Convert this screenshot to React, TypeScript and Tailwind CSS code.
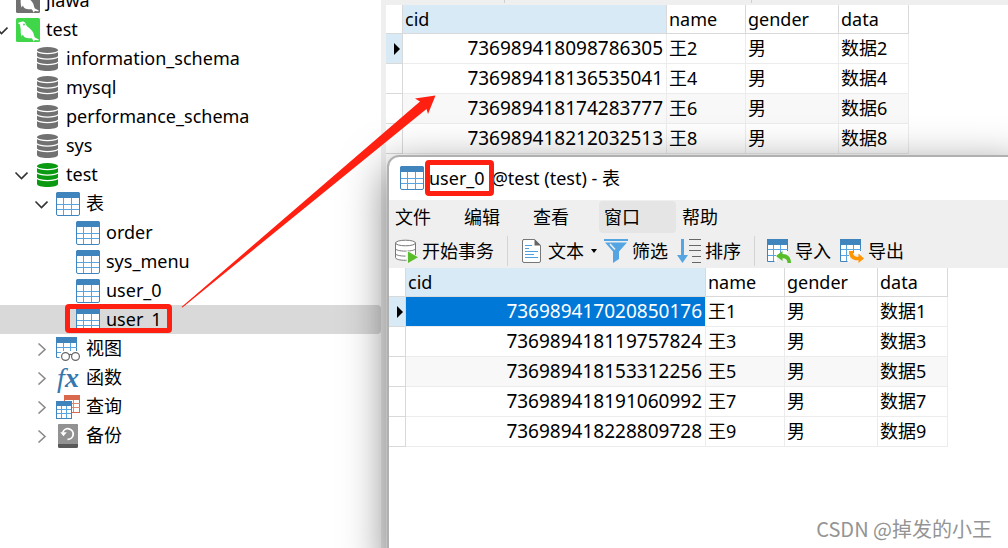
import { ReactNode, useState } from "react";
import clsx from "clsx";

type Row = { cid: string; name: string; gender: string; data: string };

type TreeItem = {
  id: string;
  label: string;
  level: 0 | 1 | 2 | 3;
  icon: ReactNode;
  expand?: "open" | "closed";
};

const USER_1_ROWS: Row[] = [
  { cid: "736989418098786305", name: "王2", gender: "男", data: "数据2" },
  { cid: "736989418136535041", name: "王4", gender: "男", data: "数据4" },
  { cid: "736989418174283777", name: "王6", gender: "男", data: "数据6" },
  { cid: "736989418212032513", name: "王8", gender: "男", data: "数据8" },
];

const USER_0_ROWS: Row[] = [
  { cid: "736989417020850176", name: "王1", gender: "男", data: "数据1" },
  { cid: "736989418119757824", name: "王3", gender: "男", data: "数据3" },
  { cid: "736989418153312256", name: "王5", gender: "男", data: "数据5" },
  { cid: "736989418191060992", name: "王7", gender: "男", data: "数据7" },
  { cid: "736989418228809728", name: "王9", gender: "男", data: "数据9" },
];

const MENUS = ["文件", "编辑", "查看", "窗口", "帮助"];

const INDENT = ["pl-0", "pl-5", "pl-10", "pl-15"];

/* ---------- icons ---------- */

function ConnectionIcon({ active }: { active?: boolean }) {
  const color = active ? "#40d64a" : "#717171";
  return (
    <svg viewBox="0 0 24 24" className="size-6">
      <rect width="24" height="24" rx="1.5" fill={color} />
      <path
        fill="#fff"
        d="M1.8 5.2C2.600 4.400 3.600 4.500 4.400 4 6 3 8 3.200 9 4.600c.8 1.200 1 2.500 2 3.600 2.200 1.800 4.600 3.400 6 6 .9 1.700.9 3.800 1.900 5.300 1.300.9 2.900 1.300 4.300 2.400-1.500.5-2.900.4-4.300.2-.4.5-.7.9-1.500 1.300-.3-1.200-.8-2.300-1.800-3.200-2.300.3-4.900.2-6.800-.9-1.100-.6-1.500-1.600-1.800-2.700L5.500 18.500C4.800 16.200 4.500 13.800 4.700 11.300 4.300 9.600 4.300 8 3.800 6.300z"
      />
      <circle cx="8" cy="6.5" r=".9" fill={color} />
    </svg>
  );
}

function DatabaseIcon({ active }: { active?: boolean }) {
  const color = active ? "#0a9a12" : "#717171";
  return (
    <svg viewBox="0 0 24 24" className="size-6">
      <path d="M1 3v18c0 1.700 4.700 3 10.500 3S22 22.700 22 21V3z" fill={color} />
      <ellipse cx="11.5" cy="3" rx="10.5" ry="3" fill={color} />
      <g fill="none" stroke="#fff" strokeWidth="1.3">
        <path d="M.8 4.300c1.500 1.400 5.500 2.300 10.700 2.300s9.200-.9 10.700-2.300" />
        <path d="M.8 9.800c1.500 1.400 5.500 2.300 10.700 2.300s9.200-.9 10.700-2.300" />
        <path d="M.8 15.300c1.500 1.400 5.500 2.300 10.700 2.300s9.200-.9 10.700-2.300" />
      </g>
    </svg>
  );
}

function TableIcon() {
  return (
    <svg viewBox="0 0 24 24" className="size-6 shrink-0">
      <rect x=".5" y=".5" width="23" height="23" rx="1.5" fill="#fff" stroke="#3f84bd" />
      <path d="M0 6V2Q0 0 2 0h20q2 0 2 2v4z" fill="#3f84bd" />
      <path d="M7.5 6v17M15.5 6v17M1 12.5h22M1 17.5h22" stroke="#5aa5e0" fill="none" />
    </svg>
  );
}

function ViewIcon() {
  return (
    <svg viewBox="0 0 24 24" className="size-6">
      <path d="M.5 5v15.500H21V5z" fill="#fff" />
      <path d="M0 0h21v6H0z" fill="#3f84bd" />
      <path d="M.5 6v14.500h3M20.500 6v8" stroke="#3f84bd" fill="none" />
      <path d="M7.500 6v8M14.500 6v8M1 10.500h20M1 15.500h4" stroke="#5aa5e0" fill="none" />
      <g fill="#fff" stroke="#666" strokeWidth="1.2">
        <circle cx="9.5" cy="19.5" r="3.9" />
        <circle cx="19.5" cy="19.5" r="3.9" />
        <path d="M13 18q1.500-1.300 3 0" fill="none" />
      </g>
    </svg>
  );
}

function FunctionIcon() {
  return (
    <span className="flex size-6 items-center justify-center font-['Liberation_Serif',serif] text-[28px] leading-6 text-[#3577ae] italic">
      f<b>x</b>
    </span>
  );
}

function QueryIcon() {
  return (
    <svg viewBox="0 0 24 24" className="size-6">
      <rect x="8.5" y=".5" width="15" height="17" fill="#fff" stroke="#d9694c" />
      <path d="M8 0h16v5H8z" fill="#d9694c" />
      <path d="M17.500 5v12M8 8.500h16M8 12.500h16" stroke="#e08a72" fill="none" />
      <path d="M0 6h16v18H0z" fill="#fff" />
      <rect x=".5" y="6.5" width="15" height="17" fill="#fff" stroke="#3f84bd" />
      <path d="M0 6h16v5H0z" fill="#3f84bd" />
      <path d="M5.500 11v12M10.500 11v12M1 14.500h14M1 18.500h14" stroke="#5aa5e0" fill="none" />
    </svg>
  );
}

function BackupIcon() {
  return (
    <svg viewBox="0 0 24 24" className="size-6">
      <rect x="2" width="20" height="24" rx="1.5" fill="#595959" />
      <path d="M2 20V1.500Q2 0 3.500 0h17Q22 0 22 1.500V20z" fill="#929292" />
      <path d="M6.800 8.500A5.300 5.300 0 1 1 11.500 15.300" stroke="#fff" strokeWidth="1.8" fill="none" />
      <path d="M4.200 8.200h6.600l-3.300 4z" fill="#fff" />
    </svg>
  );
}

function Chevron({ open }: { open: boolean }) {
  return (
    <svg viewBox="0 0 14 14" className="size-3.5" fill="none" strokeWidth="1.6">
      {open ? (
        <path d="M1.500 4.500 7.500 10.500l6-6" stroke="#333" />
      ) : (
        <path d="M4.500 1.500 11 7.500l-6.500 6" stroke="#8a8a8a" />
      )}
    </svg>
  );
}

function TransactionIcon() {
  return (
    <svg viewBox="0 0 24 24" className="size-6">
      <g fill="#fff" stroke="#777">
        <path d="M1.500 4v14.500c0 1.700 4.200 2.800 10 2.800s10-1.100 10-2.800V4z" />
        <ellipse cx="11.5" cy="4" rx="10" ry="2.8" />
        <path d="M1.500 9.500c0 1.500 4.200 2.600 10 2.600s10-1.100 10-2.600M1.500 14.500c0 1.500 4.200 2.600 10 2.600" fill="none" />
      </g>
      <path d="M12.500 11 25 18 12.500 25z" fill="#efefef" />
      <path d="M14 12.500 24 18.300 14 24z" fill="#57bd28" />
    </svg>
  );
}

function TextIcon() {
  return (
    <svg viewBox="0 0 24 24" className="size-6">
      <path d="M3 .5h11.500L20.500 6.500V22q0 1.500-1.500 1.500H4Q2.500 23.500 2.500 22V2Q2.500.5 4 .5z" fill="#fff" stroke="#777" />
      <path d="M14.500 0v6.500H21z" fill="#666" />
      <path d="M5 6.500h7M5 9.500h4M5 12.500h13M5 15.500h9M5 18.500h13" stroke="#4f9fdf" />
    </svg>
  );
}

function FilterIcon() {
  return (
    <svg viewBox="0 0 24 24" className="size-6" fill="#55a5e3">
      <path d="M0 0h24v2H0zM1 3.500h22L15 12.500v7.500L9 24V12.500z" />
      <path d="M6 5 11 10.500" stroke="#efefef" strokeWidth="1.6" />
    </svg>
  );
}

function SortIcon() {
  return (
    <svg viewBox="0 0 24 24" className="size-6">
      <path d="M4 0h3v16h4L5.500 24 0 16h4z" fill="#55a5e3" />
      <path d="M12 .5h12M12 6.500h12M12 11.500h12M15 17.500h9M15 23.500h9" stroke="#666" />
    </svg>
  );
}

function TransferIcon({ out }: { out?: boolean }) {
  return (
    <svg viewBox="0 0 24 24" className="size-6">
      <path d="M.5 5v17.500H10V15h10.500V5z" fill="#fff" />
      <path d="M0 0h21v6H0z" fill="#3f84bd" />
      <path d="M.5 6v16.500h7M20.500 6v6" stroke="#3f84bd" fill="none" />
      <path d="M6.500 6v16M13.500 6v8M1 10.500h20M1 16.500h8" stroke="#5aa5e0" fill="none" />
      {out ? (
        <path d="M9 12h4c-.3 4 1.500 6.300 5.500 5.800V14.500L24 19.500l-5.500 4.500v-2.800C12 21.800 8.700 18 9 12z" fill="#ff9500" />
      ) : (
        <path d="M9 17l6.500-5v3C21 15 24 18.500 24 24h-3.500c0-3-1.500-4.800-5-4.800V22z" fill="#57bd28" />
      )}
    </svg>
  );
}

/* ---------- tree ---------- */

const TREE: TreeItem[] = [
  { id: "jiawa", label: "jiawa", level: 0, icon: <ConnectionIcon /> },
  { id: "conn-test", label: "test", level: 0, icon: <ConnectionIcon active />, expand: "open" },
  { id: "information_schema", label: "information_schema", level: 1, icon: <DatabaseIcon /> },
  { id: "mysql", label: "mysql", level: 1, icon: <DatabaseIcon /> },
  { id: "performance_schema", label: "performance_schema", level: 1, icon: <DatabaseIcon /> },
  { id: "sys", label: "sys", level: 1, icon: <DatabaseIcon /> },
  { id: "db-test", label: "test", level: 1, icon: <DatabaseIcon active />, expand: "open" },
  { id: "tables", label: "表", level: 2, icon: <TableIcon />, expand: "open" },
  { id: "order", label: "order", level: 3, icon: <TableIcon /> },
  { id: "sys_menu", label: "sys_menu", level: 3, icon: <TableIcon /> },
  { id: "user_0", label: "user_0", level: 3, icon: <TableIcon /> },
  { id: "user_1", label: "user_1", level: 3, icon: <TableIcon /> },
  { id: "views", label: "视图", level: 2, icon: <ViewIcon />, expand: "closed" },
  { id: "functions", label: "函数", level: 2, icon: <FunctionIcon />, expand: "closed" },
  { id: "queries", label: "查询", level: 2, icon: <QueryIcon />, expand: "closed" },
  { id: "backups", label: "备份", level: 2, icon: <BackupIcon />, expand: "closed" },
];

function Sidebar() {
  const [selected, setSelected] = useState("user_1");

  return (
    <nav className="w-[381px] shrink-0 overflow-hidden bg-white">
      {/* scrolled half a row down */}
      <ul className="-mt-3.5 -ml-1.5 text-lg">
        {TREE.map((item) => (
          <li key={item.id}>
            <button
              onClick={() => setSelected(item.id)}
              className={clsx(
                "flex h-[29px] w-full items-center rounded-r text-left",
                INDENT[item.level],
                selected === item.id && "bg-[#d9d9d9]"
              )}
            >
              <span className="mr-2 w-3.5">
                {item.expand && <Chevron open={item.expand === "open"} />}
              </span>
              {item.icon}
              <span className="ml-1.5 leading-[29px]">{item.label}</span>
            </button>
          </li>
        ))}
      </ul>
    </nav>
  );
}

/* ---------- data grid ---------- */

function DataGrid({ rows, wide }: { rows: Row[]; wide?: boolean }) {
  const head = "h-[29px] border-r border-b border-[#d9d9d9] px-0.5 py-0 text-left font-normal";
  const cell = "h-[30px] border-r border-b border-[#ececec] py-0 pl-0.5 pr-[3px]";

  return (
    <table className="w-0 table-fixed border-separate border-spacing-0 text-lg leading-[27px]">
      <colgroup>
        <col className="w-[17px]" />
        <col className={wide ? "w-[300px]" : "w-[264px]"} />
        <col className="w-[79px]" />
        <col className="w-[93px]" />
        <col className="w-[70px]" />
      </colgroup>
      <thead>
        <tr className="bg-white">
          <th className={head} />
          <th className={clsx(head, "bg-[#d9eaf7]")}>cid</th>
          <th className={head}>name</th>
          <th className={head}>gender</th>
          <th className={head}>data</th>
        </tr>
      </thead>
      <tbody>
        {rows.map((row, i) => (
          <tr key={row.cid} className={i === 2 ? "bg-[#f8f8f8]" : "bg-white"}>
            <td
              className={clsx(
                "border-r border-b border-[#d9d9d9] p-0",
                i === 0 ? "bg-[#d9eaf7]" : "bg-white"
              )}
            >
              {i === 0 && (
                <svg viewBox="0 0 6 12" className="mr-0.5 ml-auto h-3 w-1.5">
                  <path d="M0 0l6 6-6 6z" />
                </svg>
              )}
            </td>
            <td
              className={clsx(
                cell,
                "text-right text-[19px]",
                wide && i === 0 && "bg-[#0078d7] text-white"
              )}
            >
              {row.cid}
            </td>
            <td className={cell}>{row.name}</td>
            <td className={cell}>{row.gender}</td>
            <td className={cell}>{row.data}</td>
          </tr>
        ))}
      </tbody>
    </table>
  );
}

/* ---------- user_0 window ---------- */

function ToolButton({ icon, label, caret }: { icon: ReactNode; label: string; caret?: boolean }) {
  return (
    <button className="flex shrink-0 items-center gap-1">
      {icon}
      <span>{label}</span>
      {caret && (
        <svg viewBox="0 0 6 4" className="mx-[3px] h-1 w-1.5">
          <path d="M0 0h6L3 4z" />
        </svg>
      )}
    </button>
  );
}

function Divider() {
  return <div className="mr-3 ml-[13px] h-[30px] w-px shrink-0 bg-[#d4d4d4]" />;
}

function TableWindow() {
  return (
    <section className="absolute top-[155px] -right-5 -bottom-5 left-[387px] overflow-hidden rounded-xl border-2 border-[#b0b0b0] bg-white shadow-[0_12px_44px_rgba(0,0,0,0.5)]">
      <header className="flex h-[43px] items-center gap-[5px] pb-0.5 pl-[11px] text-lg">
        <TableIcon />
        <h1 className="flex gap-[7px]">
          <span className="relative">
            user_0
            <span className="absolute -top-1 -right-[9px] -bottom-1 -left-1 rounded border-[5px] border-[#ff2012]" />
          </span>
          <span>@test (test) - 表</span>
        </h1>
      </header>

      <div className="flex h-[34px] bg-[#efefef] py-px text-lg">
        {MENUS.map((menu) => (
          <button
            key={menu}
            className={clsx(
              "shrink-0 rounded text-left",
              menu === "窗口" ? "w-[77px] bg-[#e5e5e5] pl-[5px]" : "w-[69px] pl-1.5",
              menu === "查看" && "mr-[3px]"
            )}
          >
            {menu}
          </button>
        ))}
      </div>

      <div className="flex h-[34px] items-center bg-[#efefef] pl-[5px] text-lg">
        <ToolButton icon={<TransactionIcon />} label="开始事务" />
        <Divider />
        <ToolButton icon={<TextIcon />} label="文本" caret />
        <div className="ml-1 flex gap-[9px]">
          <ToolButton icon={<FilterIcon />} label="筛选" />
          <ToolButton icon={<SortIcon />} label="排序" />
        </div>
        <Divider />
        <div className="flex gap-[9px]">
          <ToolButton icon={<TransferIcon />} label="导入" />
          <ToolButton icon={<TransferIcon out />} label="导出" />
        </div>
      </div>

      <DataGrid rows={USER_0_ROWS} wide />
    </section>
  );
}

/* ---------- page ---------- */

export default function App() {
  return (
    <div className="relative flex h-screen overflow-hidden bg-white font-['Noto_Sans','Noto_Sans_CJK_SC',sans-serif] text-black">
      <Sidebar />
      <div className="w-[5px] shrink-0 bg-[#efefef]" />
      <main className="min-w-0 flex-1">
        <div className="flex h-[5px] items-start bg-[#efefef]">
          <div className="ml-[118px] h-[3px] w-px bg-[#d0d0d0]" />
          <div className="ml-[246px] h-[3px] w-px bg-[#d0d0d0]" />
        </div>
        <DataGrid rows={USER_1_ROWS} />
      </main>

      <TableWindow />

      {/* callouts */}
      <div className="absolute top-[304px] left-[65px] h-[29px] w-[107px] rounded border-[5px] border-[#ff2012]" />
      <svg
        viewBox="0 0 256 214"
        className="pointer-events-none absolute top-[94px] left-[181px] h-[214px] w-[256px]"
      >
        <path d="M.5 213 239 7.500 234 4.500 254.500 1.500 247 20 245.500 15 1.500 213.500z" fill="#ff2012" />
      </svg>

      <p className="absolute right-4 bottom-[5px] font-['Noto_Sans_CJK_SC',sans-serif] text-xl text-[#949494]">
        CSDN @掉发的小王
      </p>
    </div>
  );
}
